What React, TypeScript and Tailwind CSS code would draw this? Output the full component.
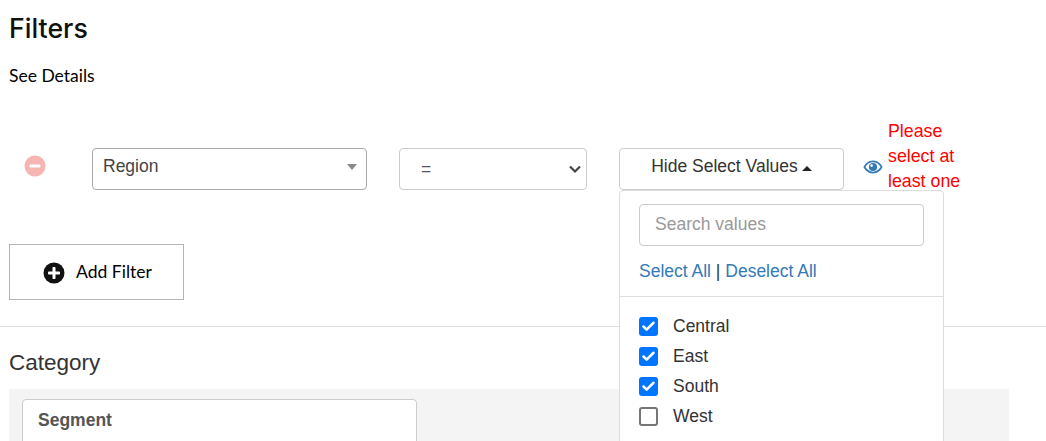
import { Check } from "lucide-react";

const regions = [
    { name: "Central", checked: true },
    { name: "East", checked: true },
    { name: "South", checked: true },
    { name: "West", checked: false },
];

function RemoveIcon() {
    return (
        <svg width="22" height="22" viewBox="0 0 22 22" className="block">
            <circle cx="11" cy="11" r="10.5" fill="#f5b5b1" />
            <rect x="5.5" y="9.5" width="11" height="3" rx="1" fill="#fff" />
        </svg>
    );
}

function EyeIcon() {
    return (
        <svg width="20" height="14" viewBox="0 0 20 14" className="block">
            <path d="M10 0.5C5.6 0.5 2.2 3.4 0.4 7c1.8 3.6 5.2 6.5 9.6 6.5s7.8-2.9 9.6-6.5C17.8 3.4 14.4 0.5 10 0.5z" fill="#337ab7" />
            <path d="M10 2.3C6.8 2.3 4 4.3 2.4 7c1.6 2.7 4.4 4.7 7.6 4.7s6-2 7.6-4.7C16 4.3 13.2 2.3 10 2.3z" fill="#fff" />
            <circle cx="10" cy="7" r="4.1" fill="#337ab7" />
            <circle cx="8.6" cy="5.6" r="1.3" fill="#fff" />
        </svg>
    );
}

function PlusIcon() {
    return (
        <svg width="22" height="22" viewBox="0 0 22 22" className="block">
            <circle cx="11" cy="11" r="10.5" fill="#111" />
            <rect x="5" y="9.5" width="12" height="3" rx="0.8" fill="#fff" />
            <rect x="9.5" y="5" width="3" height="12" rx="0.8" fill="#fff" />
        </svg>
    );
}

function ValuesMenu() {
    return (
        <div className="absolute left-0 top-[42px] w-[325px] h-[300px] bg-white border border-[#ddd] rounded-[4px] z-10">
            <div className="px-[19px] pt-[13px]">
                <div className="h-[42px] border border-[#ccc] rounded-[4px] px-[15px] pb-[2px] flex items-center text-[17.5px] text-[#999]">
                    Search values
                </div>
                <div className="h-[50px] flex items-center text-[17.5px] text-[#337ab7]">
                    Select All&nbsp;<span className="text-[#333]">|</span>&nbsp;Deselect All
                </div>
            </div>
            <div className="border-t border-[#ddd] pt-[14px] px-[19px]">
                {regions.map((r) => (
                    <div key={r.name} className="h-[30px] flex items-center gap-[15px] text-[17.5px] text-[#333]">
                        {r.checked ? (
                            <span className="w-[19px] h-[19px] rounded-[3px] bg-[#0075ff] flex items-center justify-center">
                                <Check size={15} color="#fff" strokeWidth={4} />
                            </span>
                        ) : (
                            <span className="w-[19px] h-[19px] rounded-[3px] bg-white border-2 border-[#767676]" />
                        )}
                        {r.name}
                    </div>
                ))}
            </div>
        </div>
    );
}

export default function App() {
    return (
        <div className="h-[441px] w-[1046px] overflow-hidden bg-white font-['Liberation_Sans',Arial,sans-serif]">
            <div className="px-[9px] text-black">
                <h1 className="pt-[11px] h-[67px] font-['Inter',sans-serif] text-[26.7px] leading-[34px] font-medium text-[#111]">Filters</h1>
                <div className="h-[19px] flex items-center font-['Lato',sans-serif] text-[17.5px]">See Details</div>
            </div>

            {/* filter row */}
            <div className="flex items-start mt-[62px] pl-[92px] relative z-10">
                <div className="absolute left-[24px] top-[7px]">
                    <RemoveIcon />
                </div>
                <div className="w-[275px] h-[42px] border border-[#aaa] rounded-[4px] pl-[10px] pr-[9px] flex items-center justify-between text-[17.5px] text-[#444]">
                    <span className="-mt-[5px]">Region</span>
                    <span className="-mt-[5px] w-0 h-0 border-x-[5px] border-x-transparent border-t-[6px] border-t-[#888]" />
                </div>
                <div className="ml-[32px] w-[188px] h-[42px] border border-[#ccc] rounded-[4px] pl-[21px] pr-[4px] flex items-center justify-between text-[17.5px] text-[#555]">
                    <span>=</span>
                    <svg width="14" height="10" viewBox="0 0 14 10">
                        <path d="M2 2.5l5 5 5-5" fill="none" stroke="#444" strokeWidth="2.2" />
                    </svg>
                </div>
                <div className="relative ml-[32px]">
                    <div className="w-[225px] h-[42px] border border-[#ccc] rounded-[4px] flex items-center justify-center gap-[4px] text-[17.5px] text-[#333]">
                        <span className="-mt-[6px]">Hide Select Values</span>
                        <span className="w-0 h-0 -mt-[1px] border-x-[5px] border-x-transparent border-b-[5px] border-b-[#222]" />
                    </div>
                    <ValuesMenu />
                </div>
                <div className="ml-[19px] mt-[12px]">
                    <EyeIcon />
                </div>
                <div className="ml-[5px] -mt-[29px] w-[90px] text-[17.8px] leading-[25px] text-[#ff0000]">
                    Please select at least one
                </div>
            </div>

            <div className="px-[9px] mt-[50px] font-['Lato',sans-serif]">
                <div className="w-[175px] h-[56px] border border-[#b5b5b5] pl-[2px] pt-[1px] flex items-center justify-center gap-[11px] text-[17.5px] text-black">
                    <PlusIcon />
                    Add Filter
                </div>
            </div>

            <div className="mt-[26px] border-t border-[#ddd]" />

            <div className="px-[9px]">
                <h2 className="h-[62px] pt-[20px] text-[22.5px] leading-[32px] text-[#333]">Category</h2>
                <div className="w-[1000px] h-[60px] bg-[#f4f4f4] pt-[10px] px-[13px]">
                    <div className="w-[395px] h-[60px] bg-white border border-[#ccc] rounded-[4px] px-[15px] pt-[8px] text-[17.5px] leading-[24px] font-bold text-[#555]">
                        Segment
                    </div>
                </div>
            </div>
        </div>
    );
}
